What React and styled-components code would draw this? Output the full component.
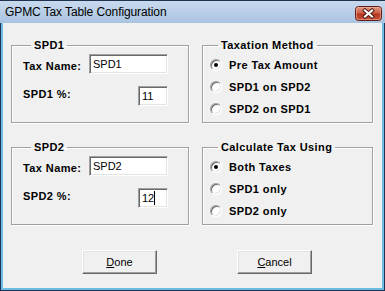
import React from 'react';
import styled, { createGlobalStyle } from 'styled-components';

const GlobalStyle = createGlobalStyle`
  html, body {
    margin: 0;
    padding: 0;
    background: #f0f0f0;
  }
  * {
    box-sizing: border-box;
  }
`;

const Window = styled.div`
  width: 385px;
  height: 291px;
  display: flex;
  flex-direction: column;
  border: 1px solid #1f3250;
  background: #6cbbe4;
  font-family: "Liberation Sans", Arial, sans-serif;
`;

const TitleBar = styled.div`
  height: 22px;
  display: flex;
  align-items: center;
  justify-content: space-between;
  padding: 0 4px 0 6px;
  margin: 0 -2px;
  background: linear-gradient(#c8d9ed, #a9c4e1);
`;

const Title = styled.span`
  font-size: 12px;
  color: #000;
  letter-spacing: -0.1px;
`;

const CloseIcon = styled.svg`
  display: block;
  margin-top: 2px;
`;

const Client = styled.div`
  flex: 1;
  margin: 0 2px 2px;
  background: #f0f0f0;
  padding: 15px 0 0 8px;
`;

const Groups = styled.div`
  display: grid;
  grid-template-columns: 178px 171px;
  column-gap: 13px;
  row-gap: 17px;
`;

const Group = styled.fieldset`
  margin: 0;
  height: 85px;
  padding: ${({ pad }) => pad};
  border: 1px solid #a0a0a0;
  box-shadow: inset 1px 1px 0 #fff, 1px 1px 0 #fff;
  min-width: 0;
`;

const Legend = styled.legend`
  margin-left: 8px;
  padding: 0 3px;
  font-size: 11px;
  font-weight: bold;
  letter-spacing: 0.4px;
  line-height: 14px;
  color: #000;
`;

const FieldRow = styled.div`
  display: flex;
  justify-content: space-between;
  align-items: flex-end;
  margin-top: ${({ top }) => top}px;
`;

const Label = styled.span`
  font-size: 11px;
  font-weight: bold;
  letter-spacing: 0.4px;
  color: #000;
  line-height: 13px;
  margin-bottom: ${({ drop }) => drop}px;
`;

const Field = styled.div`
  width: ${({ w }) => w}px;
  height: 20px;
  background: #fff;
  border: 1px solid;
  border-color: #a0a0a0 #fff #fff #a0a0a0;
  box-shadow: inset 1px 1px 0 #696969, inset -1px -1px 0 #e3e3e3;
  padding: 2px 0 0 3px;
  font-size: 11px;
  line-height: 14px;
  color: #000;
  display: flex;
  align-items: flex-start;
`;

const Caret = styled.span`
  display: inline-block;
  width: 1px;
  height: 14px;
  background: #000;
`;

const RadioRow = styled.div`
  height: 22px;
  display: flex;
  align-items: center;
  gap: 7px;
`;

const RadioDot = styled.span`
  position: relative;
  width: 12px;
  height: 12px;
  border-radius: 50%;
  border: 1px solid;
  border-color: #a0a0a0 #fff #fff #a0a0a0;
  box-shadow: inset 1px 1px 0 #696969, inset -1px -1px 0 #e3e3e3;
  background: #fff;
  flex: none;

  &::after {
    content: '';
    display: ${({ $checked }) => ($checked ? 'block' : 'none')};
    position: absolute;
    left: 3px;
    top: 3px;
    width: 4px;
    height: 4px;
    border-radius: 50%;
    background: #000;
  }
`;

const RadioText = styled.span`
  font-size: 11px;
  font-weight: bold;
  letter-spacing: 0.4px;
  color: #000;
`;

const ButtonRow = styled.div`
  display: flex;
  gap: 80px;
  margin: 25px 0 0 71px;
`;

const Button = styled.div`
  width: 75px;
  height: 24px;
  display: flex;
  align-items: center;
  justify-content: center;
  background: #f0f0f0;
  border: 1px solid;
  border-color: #fff #696969 #696969 #fff;
  box-shadow: inset -1px -1px 0 #a0a0a0, inset 1px 1px 0 #e3e3e3;
  font-size: 11px;
  color: #000;
  padding-bottom: 1px;

  u {
    text-decoration: underline;
    text-underline-offset: 1px;
  }
`;

const Radio = ({ checked, children }) => (
  <RadioRow>
    <RadioDot $checked={checked} />
    <RadioText>{children}</RadioText>
  </RadioRow>
);

const TaxGroup = ({ name, percent, editing }) => (
  <Group pad="0 20px 0 11px">
    <Legend>{name}</Legend>
    <FieldRow top={2}>
      <Label drop={1}>Tax Name:</Label>
      <Field w={79}>{name}</Field>
    </FieldRow>
    <FieldRow top={12}>
      <Label drop={5}>{name} %:</Label>
      <Field w={30}>
        {percent}
        {editing && <Caret />}
      </Field>
    </FieldRow>
  </Group>
);

const RadioGroup = ({ title, options, selected }) => (
  <Group pad="2px 0 0 7px">
    <Legend>{title}</Legend>
    {options.map((o, i) => (
      <Radio key={o} checked={i === selected}>{o}</Radio>
    ))}
  </Group>
);

export default function App() {
  return (
    <>
      <GlobalStyle />
      <Window>
        <TitleBar>
          <Title>GPMC Tax Table Configuration</Title>
          <CloseIcon width="27" height="15" viewBox="0 0 27 15">
            <defs>
              <linearGradient id="closeRed" x1="0" y1="0" x2="0" y2="1">
                <stop offset="0" stopColor="#e49a86" />
                <stop offset="0.48" stopColor="#cc5c45" />
                <stop offset="0.52" stopColor="#b23620" />
                <stop offset="1" stopColor="#c9553d" />
              </linearGradient>
            </defs>
            <rect x="0.5" y="0.5" width="26" height="14" rx="3" fill="url(#closeRed)" stroke="#5e1c12" />
            <rect x="1.5" y="1.5" width="24" height="12" rx="2" fill="none" stroke="#f0b8a8" strokeOpacity="0.6" />
            <path d="M10 4.5 L17 10.5 M17 4.5 L10 10.5" stroke="#4a140c" strokeWidth="4" strokeLinecap="square" />
            <path d="M10 4.5 L17 10.5 M17 4.5 L10 10.5" stroke="#fff" strokeWidth="2.2" strokeLinecap="square" />
          </CloseIcon>
        </TitleBar>
        <Client>
          <Groups>
            <TaxGroup name="SPD1" percent="11" />
            <RadioGroup
              title="Taxation Method"
              options={['Pre Tax Amount', 'SPD1 on SPD2', 'SPD2 on SPD1']}
              selected={0}
            />
            <TaxGroup name="SPD2" percent="12" editing />
            <RadioGroup
              title="Calculate Tax Using"
              options={['Both Taxes', 'SPD1 only', 'SPD2 only']}
              selected={0}
            />
          </Groups>
          <ButtonRow>
            <Button><u>D</u>one</Button>
            <Button><u>C</u>ancel</Button>
          </ButtonRow>
        </Client>
      </Window>
    </>
  );
}
